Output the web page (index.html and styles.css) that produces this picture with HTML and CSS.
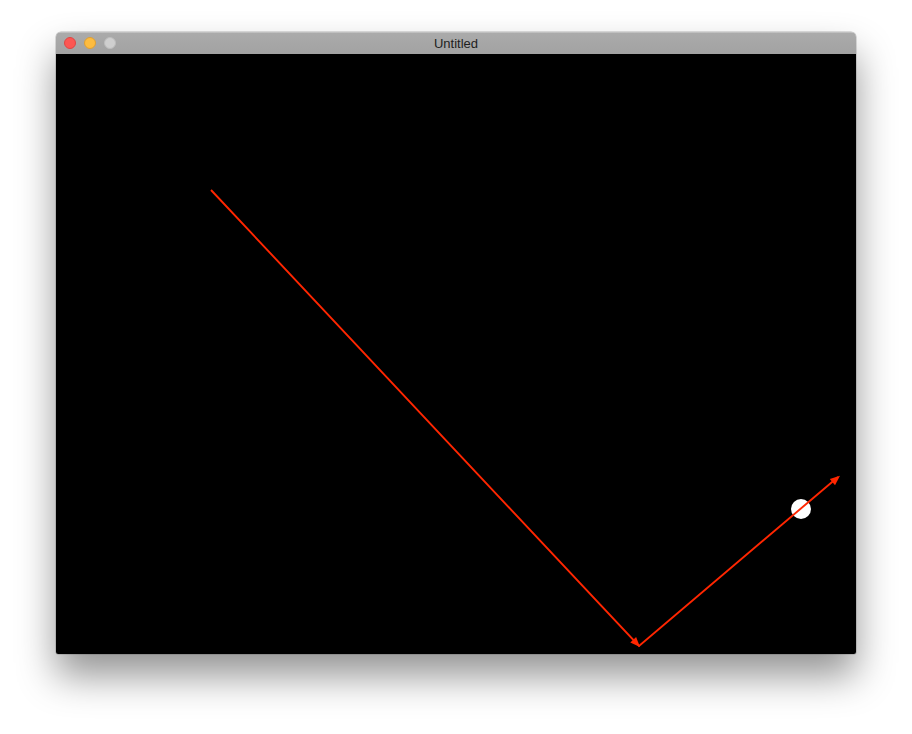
FILE: index.html
```html
<!DOCTYPE html>
<html>
<head>
<meta charset="utf-8">
<link rel="stylesheet" href="styles.css">
</head>
<body>
<div class="window">
  <div class="titlebar">
    <div class="lights">
      <span class="light red"></span>
      <span class="light yellow"></span>
      <span class="light gray"></span>
    </div>
    <div class="title">Untitled</div>
  </div>
  <svg class="canvas" width="800" height="600" viewBox="0 0 800 600">
    <rect width="800" height="600" fill="#000"/>
    <circle cx="745" cy="455" r="10" fill="#fff"/>
    <polyline points="155,136 583,592 782,423" fill="none" stroke="#ff2600" stroke-width="1.9"/>
    <polygon points="584,593 574.3,588.4 580.1,583" fill="#ff2600"/>
    <polygon points="784,421.7 779,431.3 773.8,425.1" fill="#ff2600"/>
  </svg>
</div>
</body>
</html>
```
FILE: styles.css
```css
html, body {
  margin: 0;
  padding: 0;
  background: #ffffff;
}
body {
  width: 912px;
  height: 734px;
  overflow: hidden;
  padding: 32px 0 0 56px;
  box-sizing: border-box;
}
.window {
  width: 800px;
  display: flex;
  flex-direction: column;
  border-radius: 5px 5px 2px 2px;
  overflow: hidden;
  box-shadow: 0 22px 38px rgba(0, 0, 0, 0.42), 0 0 0 0.5px rgba(0, 0, 0, 0.25);
}
.titlebar {
  height: 22px;
  display: flex;
  align-items: center;
  position: relative;
  background: linear-gradient(#ababab, #a2a2a2);
  box-shadow: inset 0 1px 0 rgba(255,255,255,0.25);
}
.lights {
  display: flex;
  gap: 8px;
  padding-left: 8px;
}
.light {
  width: 12px;
  height: 12px;
  border-radius: 50%;
  box-sizing: border-box;
}
.red { background: #fc5753; border: 0.5px solid #df4744; }
.yellow { background: #fdbc40; border: 0.5px solid #de9f34; }
.gray { background: #cfcfcf; border: 0.5px solid #bdbdbd; }
.title {
  position: absolute;
  left: 0;
  right: 0;
  top: 1px;
  text-align: center;
  font-family: "Liberation Sans", Arial, sans-serif;
  font-size: 13px;
  color: #1e1e1e;
  line-height: 22px;
}
.canvas {
  display: block;
}
```
